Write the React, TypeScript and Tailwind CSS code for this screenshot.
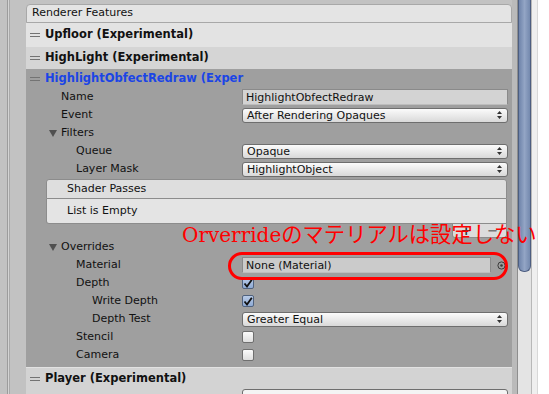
import React from 'react';

const Hamburger = () => (
  <div className="flex flex-col gap-[2px] w-[10px] shrink-0">
    <div className="h-px bg-[#737373]" />
    <div className="h-px bg-[#737373]" />
  </div>
);

const Foldout = ({ label }: { label: string }) => (
  <div className="flex h-[18px] shrink-0 items-center pl-[23px] gap-[4px]">
    <svg width="8" height="7" viewBox="0 0 8 7">
      <path d="M0 0 L8 0 L4 7 Z" fill="#505050" />
    </svg>
    <span>{label}</span>
  </div>
);

const Row = ({
  label,
  pad,
  children,
}: {
  label: string;
  pad: string;
  children?: React.ReactNode;
}) => (
  <div className="flex h-[18px] shrink-0 items-center">
    <div className={`w-[216px] shrink-0 ${pad}`}>{label}</div>
    <div className="w-[266px] flex items-center">{children}</div>
  </div>
);

const Dropdown = ({ value }: { value: string }) => (
  <div className="w-full h-[15px] rounded-[3px] border border-[#6e6e6e] bg-linear-to-b from-[#fbfbfb] to-[#d9d9d9] flex items-center justify-between pl-[4px] pr-[5px] leading-none">
    <span>{value}</span>
    <svg width="5" height="8" viewBox="0 0 5 8">
      <path d="M0 3 L2.5 0 L5 3 Z M0 5 L2.5 8 L5 5 Z" fill="#333" />
    </svg>
  </div>
);

const Check = ({ on }: { on?: boolean }) => (
  <div
    className={
      on
        ? 'w-[12px] h-[12px] rounded-[2px] border border-[#50627e] bg-linear-to-b from-[#b9cbe6] to-[#8eaad4] flex items-center justify-center'
        : 'w-[12px] h-[12px] rounded-[2px] border border-[#6f6f6f] bg-linear-to-b from-[#fbfbfb] to-[#dedede]'
    }>
    {on && (
      <svg width="10" height="9" viewBox="0 0 10 9">
        <path d="M1.5 4.5 L4 7.5 L8.8 0.8" stroke="#111" strokeWidth="1.8" fill="none" />
      </svg>
    )}
  </div>
);

export default function App() {
  return (
    <div className="relative w-[549px] h-[394px] overflow-hidden flex bg-[#c2c2c2] font-['DejaVu_Sans',sans-serif] text-[11px] text-[#111]">
      {/* left gutter */}
      <div className="w-[26px] shrink-0 flex">
        <div className="w-[7px]" />
        <div className="w-px bg-[#9c9c9c]" />
        <div className="w-px bg-[#d4d4d4]" />
        <div className="w-px bg-[#a9a9a9]" />
      </div>

      {/* main panel */}
      <div className="w-[486px] shrink-0 flex flex-col">
        <div className="mt-[4px] h-[19px] shrink-0 rounded-t-[4px] border border-[#a8a8a8] bg-[#e4e4e4] flex items-center pl-[5px]">
          Renderer Features
        </div>
        <div className="h-[24px] shrink-0 bg-[#e3e3e3] flex items-center pl-[4px] gap-[5px] font-bold text-[11.5px]">
          <Hamburger />
          <span>Upfloor (Experimental)</span>
        </div>
        <div className="h-[22px] shrink-0 bg-[#d5d5d5] flex items-center pl-[4px] gap-[5px] font-bold text-[11.5px]">
          <Hamburger />
          <span>HighLight (Experimental)</span>
        </div>

        <div className="shrink-0 bg-[#9f9f9f] flex flex-col pb-[3px]">
          <div className="h-[19px] shrink-0 flex items-center pl-[4px] gap-[5px] font-bold text-[11.5px] text-[#1b45e6]">
            <Hamburger />
            <span>HighlightObfectRedraw (Exper</span>
          </div>
          <Row label="Name" pad="pl-[35px]">
            <div className="w-full h-[16px] border border-[#8a8a8a] border-b-[#bdbdbd] bg-[#d3d3d3] flex items-center pl-[3px] leading-none">
              HighlightObfectRedraw
            </div>
          </Row>
          <Row label="Event" pad="pl-[35px]">
            <Dropdown value="After Rendering Opaques" />
          </Row>
          <Foldout label="Filters" />
          <Row label="Queue" pad="pl-[50px]">
            <Dropdown value="Opaque" />
          </Row>
          <Row label="Layer Mask" pad="pl-[50px]">
            <Dropdown value="HighlightObject" />
          </Row>

          <div className="mt-[1px] ml-[20px] w-[461px] shrink-0 flex flex-col">
            <div className="h-[20px] shrink-0 rounded-t-[3px] border border-[#8c8c8c] bg-[#dedede] flex items-center pl-[20px]">
              Shader Passes
            </div>
            <div className="h-[25px] shrink-0 rounded-bl-[3px] border border-t-0 border-[#8c8c8c] bg-[#e4e4e4] flex items-center pl-[20px]">
              List is Empty
            </div>
            <div className="self-end w-[55px] h-[14px] shrink-0 rounded-b-[3px] border border-t-0 border-[#8c8c8c] bg-[#dcdcdc] flex items-center justify-around text-[13px] leading-none text-[#333] font-bold">
              <span>+</span>
              <span className="text-[#777]">−</span>
            </div>
          </div>

          <Foldout label="Overrides" />
          <Row label="Material" pad="pl-[50px]">
            <div className="w-[249px] h-[16px] border border-[#8a8a8a] border-b-[#bdbdbd] bg-[#cbcbcb] flex items-center pl-[3px] leading-none">
              None (Material)
            </div>
            <svg className="ml-[6px]" width="9" height="9" viewBox="0 0 9 9">
              <circle cx="4.5" cy="4.5" r="3.6" stroke="#3a3a3a" strokeWidth="1" fill="none" />
              <circle cx="4.5" cy="4.5" r="1.3" fill="#3a3a3a" />
            </svg>
          </Row>
          <Row label="Depth" pad="pl-[50px]">
            <Check on />
          </Row>
          <Row label="Write Depth" pad="pl-[66px]">
            <Check on />
          </Row>
          <Row label="Depth Test" pad="pl-[66px]">
            <Dropdown value="Greater Equal" />
          </Row>
          <Row label="Stencil" pad="pl-[50px]">
            <Check />
          </Row>
          <Row label="Camera" pad="pl-[50px]">
            <Check />
          </Row>
        </div>

        <div className="h-[22px] shrink-0 border-t border-[#e2e2e2] bg-[#d3d3d3] flex items-center pl-[4px] gap-[5px] font-bold text-[11.5px]">
          <Hamburger />
          <span>Player (Experimental)</span>
        </div>
        <div className="h-[12px] shrink-0 bg-[#d3d3d3] pl-[216px]">
          <div className="w-[266px] h-[12px] rounded-t-[3px] border border-[#6e6e6e] bg-[#f4f4f4]" />
        </div>
      </div>

      {/* right side: gap + scrollbar */}
      <div className="w-[5px] shrink-0 bg-[#bababa]" />
      <div className="w-px shrink-0 bg-[#8e8e8e]" />
      <div className="w-[14px] shrink-0 flex flex-col bg-[#e4e4e4] border-r border-[#b8b8b8]">
        <div className="h-[272px] shrink-0 rounded-b-[6px] border-x border-b border-[#4d5e80] bg-linear-to-r from-[#6f84aa] via-[#93a5c5] to-[#7489ae]" />
      </div>
      <div className="w-[5px] shrink-0 bg-[#efefef]" />
      <div className="w-px shrink-0 bg-[#d8d8d8]" />
      <div className="flex-1 bg-white" />

      {/* annotation */}
      <div className="absolute left-[182px] top-[223px] whitespace-nowrap text-[#ff0000] leading-[20px]">
        <span className="font-['DejaVu_Serif',serif] text-[20px]">Orverride</span>
        <span className="font-['Noto_Sans_CJK_JP',sans-serif] text-[21.3px]">のマテリアルは設定しない</span>
      </div>
      <div className="absolute left-[228px] top-[252px] w-[280px] h-[28px] rounded-full border-[3px] border-[#ff0000]" />
    </div>
  );
}
